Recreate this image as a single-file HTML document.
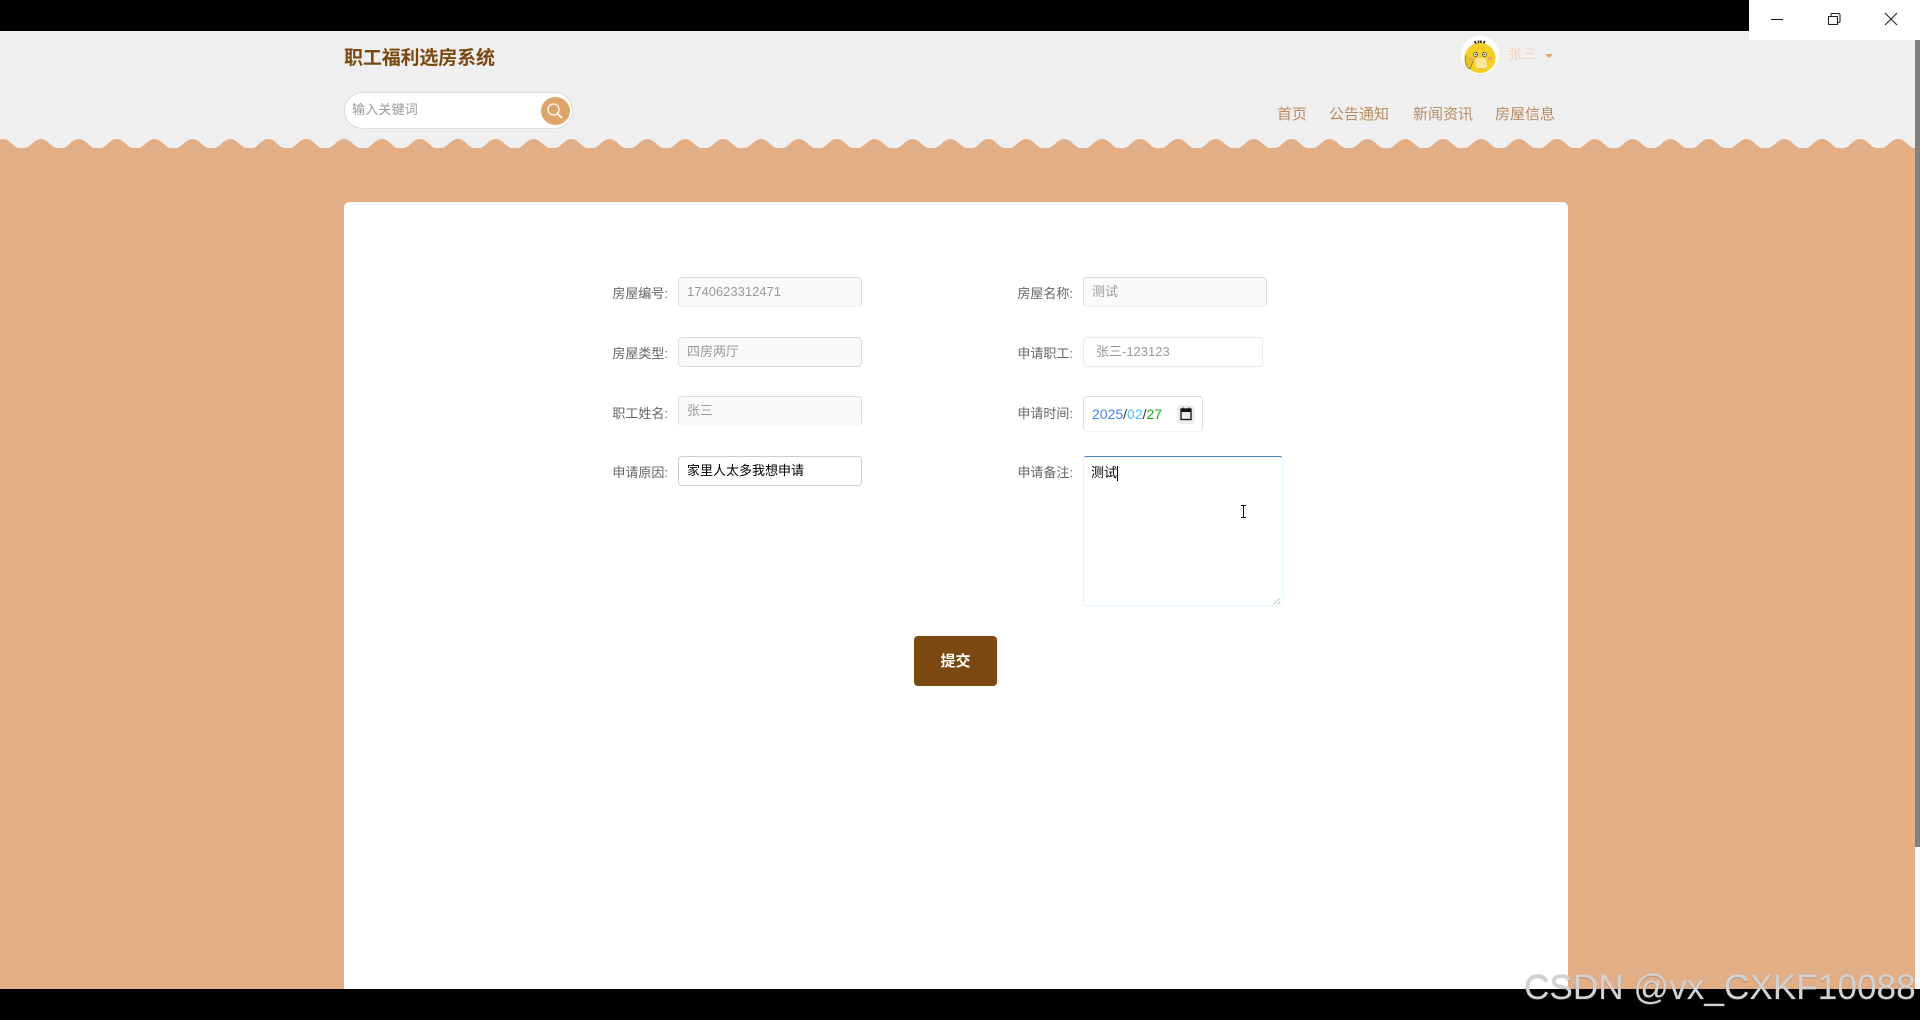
<!DOCTYPE html>
<html lang="zh-CN">
<head>
<meta charset="utf-8">
<title>职工福利选房系统</title>
<style>
html,body{margin:0;padding:0;width:1920px;height:1020px;overflow:hidden;background:#000;}
body{position:relative;font-family:"Liberation Sans","Noto Sans CJK SC",sans-serif;}
.a{position:absolute;}
.t{position:absolute;white-space:nowrap;line-height:20px;}
.lab{position:absolute;white-space:nowrap;line-height:20px;font-size:13px;color:#666;text-align:right;width:70px;}
.inp{position:absolute;box-sizing:border-box;width:184px;height:30px;border:1px solid #ddd;border-radius:4px;background:#fafafa;font-size:13px;color:#999;line-height:28px;padding-left:8px;white-space:nowrap;}
.nav{position:absolute;top:105px;font-size:15px;line-height:20px;color:#b98c62;white-space:nowrap;}
</style>
</head>
<body>
<div class="a" style="left:0;top:31px;width:1915px;height:958px;background:#e2ae86;"></div>
<div class="a" style="left:0;top:31px;width:1915px;height:108px;background:#efefef;"></div>
<svg class="a" style="left:0;top:139px;" width="1915" height="10" viewBox="0 0 1915 10">
<rect width="1915" height="10" fill="#efefef"/>
<defs><pattern id="w" x="-16" y="0" width="37.9" height="10" patternUnits="userSpaceOnUse">
<path d="M0 9L3 9C8 9 12 0 19 0C26 0 30 9 35 9L37.9 9V10H0Z" fill="#e2ae86"/></pattern></defs>
<rect width="1915" height="10" fill="url(#w)"/>
</svg>

<div class="t" style="left:344px;top:48px;font-size:19px;font-weight:bold;color:#7a4810;line-height:22px;letter-spacing:-.15px;">职工福利选房系统</div>

<div class="a" style="left:344px;top:92px;width:229px;height:37px;box-sizing:border-box;border:1px solid #ddd;border-radius:19px;background:#fff;"></div>
<div class="t" style="left:352px;top:100px;font-size:13px;color:#999;letter-spacing:.2px;">输入关键词</div>
<div class="a" style="left:541px;top:97px;width:29px;height:28px;border-radius:50%;background:#dfa469;"></div>
<svg class="a" style="left:541px;top:97px;" width="29" height="28" viewBox="0 0 29 28" fill="none" stroke="#fff">
<circle cx="12.500" cy="12.500" r="5.500" stroke-width="1.200"/><path d="M16.500 17L21 21" stroke-width="1.800"/>
</svg>

<svg class="a" style="left:1461px;top:36px;" width="38" height="38" viewBox="0 0 38 38">
<circle cx="19" cy="19" r="19" fill="#fff"/>
<path d="M15 8C14.500 6 14 5.500 13.500 5M17.500 7.500V4.500M20 7.500V4.500M22.500 8C23 6 23.500 5.500 24 5" stroke="#3a3020" stroke-width="1.800" fill="none"/>
<ellipse cx="19" cy="22" rx="15.500" ry="15" fill="#f4d027"/>
<path d="M5 19C3 25 5 32 9 33L12 25" fill="#e9c31f" stroke="#8a7a30" stroke-width=".8"/>
<circle cx="14.500" cy="18.500" r="2" fill="#fff" stroke="#333" stroke-width=".7"/><circle cx="14.800" cy="18.500" r=".8" fill="#222"/>
<circle cx="23.500" cy="18.500" r="2" fill="#fff" stroke="#333" stroke-width=".7"/><circle cx="23.200" cy="18.500" r=".8" fill="#222"/>
<ellipse cx="11" cy="23" rx="2" ry="1.500" fill="#f49a8c"/><ellipse cx="29" cy="22.500" rx="2" ry="1.500" fill="#f49a8c"/>
<path d="M14 23C16 21 23 21 25 23L27 31C24 33 16 33 14 31Z" fill="#f9e79a" stroke="#d9be50" stroke-width=".5"/>
</svg>
<div class="t" style="left:1508px;top:44px;font-size:14px;color:#f0d4b8;">张三</div>
<div class="a" style="left:1545px;top:54px;width:0;height:0;border-left:4px solid transparent;border-right:4px solid transparent;border-top:4px solid #e6a468;"></div>

<div class="nav" style="left:1277px;">首页</div>
<div class="nav" style="left:1329px;">公告通知</div>
<div class="nav" style="left:1413px;">新闻资讯</div>
<div class="nav" style="left:1495px;">房屋信息</div>

<div class="a" style="left:344px;top:202px;width:1224px;height:787px;background:#fff;border-radius:5px 5px 0 0;"></div>

<div class="lab" style="left:598px;top:284px;">房屋编号:</div>
<div class="lab" style="left:598px;top:344px;">房屋类型:</div>
<div class="lab" style="left:598px;top:404px;">职工姓名:</div>
<div class="lab" style="left:598px;top:463px;">申请原因:</div>
<div class="inp" style="left:678px;top:277px;border-bottom-color:#f4f4f4;">1740623312471</div>
<div class="inp" style="left:678px;top:337px;">四房两厅</div>
<div class="inp" style="left:678px;top:396px;border-bottom-color:#f4f4f4;">张三</div>
<div class="inp" style="left:678px;top:456px;background:#fff;color:#000;border-color:#ccc;">家里人太多我想申请</div>

<div class="lab" style="left:1003px;top:284px;">房屋名称:</div>
<div class="lab" style="left:1003px;top:344px;">申请职工:</div>
<div class="lab" style="left:1003px;top:404px;">申请时间:</div>
<div class="lab" style="left:1003px;top:463px;">申请备注:</div>
<div class="inp" style="left:1083px;top:277px;border-bottom-color:#f4f4f4;">测试</div>
<div class="inp" style="left:1083px;top:337px;width:180px;background:#fff;border-color:#eaeaea;padding-left:12px;">张三-123123</div>
<div class="a" style="left:1083px;top:396px;width:120px;height:36px;box-sizing:border-box;border:1px solid #ddd;border-bottom-color:#f2f2f2;border-radius:4px;"></div>
<div class="t" style="left:1092px;top:404px;font-size:14px;"><span style="color:#4285f4;">2025</span><span style="color:#333;">/</span><span style="color:#4fc3f7;">02</span><span style="color:#333;">/</span><span style="color:#1aad19;">27</span></div>
<div class="a" style="left:1177px;top:405px;width:18px;height:19px;background:#ececec;border-radius:4px;"></div>
<svg class="a" style="left:1180px;top:407px;" width="12" height="14" viewBox="0 0 12 14">
<path d="M3 0.500V2M9 0.500V2" stroke="#111" stroke-width="1.200"/>
<rect x="1" y="2" width="10" height="10.500" fill="none" stroke="#111" stroke-width="1.300"/>
<rect x="1" y="2" width="10" height="3" fill="#111"/>
</svg>

<div class="a" style="left:1083px;top:456px;width:200px;height:150px;box-sizing:border-box;border:1px solid #dff6fb;border-top:1px solid #4a7fc8;border-radius:3px;"></div>
<div class="t" style="left:1091px;top:463px;font-size:13px;color:#000;">测试</div>
<div class="a" style="left:1117px;top:466px;width:1px;height:15px;background:#000;"></div>
<svg class="a" style="left:1273px;top:597px;" width="9" height="8" viewBox="0 0 9 8"><path d="M1 7L7 1M5 7L7 5" stroke="#888" stroke-width="1" stroke-dasharray="1 1" fill="none"/></svg>
<svg class="a" style="left:1240px;top:505px;" width="7" height="13" viewBox="0 0 7 13"><path d="M1 .5H6M3.500 .5V12.500M1 12.500H6" stroke="#111" stroke-width="1" fill="none"/></svg>

<div class="a" style="left:914px;top:636px;width:83px;height:50px;background:#7a4810;border-radius:4px;color:#fff;font-size:15px;font-weight:bold;text-align:center;line-height:52px;">提交</div>

<div class="a" style="left:1915px;top:31px;width:5px;height:958px;background:#f8f8f8;"></div>
<div class="a" style="left:1915px;top:40px;width:5px;height:807px;background:#808080;"></div>

<div class="a" style="left:1749px;top:0;width:171px;height:40px;background:#fff;"></div>
<svg class="a" style="left:1749px;top:0;" width="171" height="40" viewBox="0 0 171 40" fill="none" stroke="#222" stroke-width="1.100">
<path d="M22 19.500H34"/>
<path d="M79.500 16.500H88.500V24.500H79.500ZM82 16.500V14.500Q82 13.500 83 13.500H89.500Q91 13.500 91 15V21.500Q91 22.500 88.500 22.500"/>
<path d="M136 13L148 25M148 13L136 25"/>
</svg>

<div class="t" style="left:1524px;top:968px;font-size:35.2px;line-height:40px;color:#d2d2d2;text-shadow:0 1px 1px rgba(90,90,90,.35);">CSDN @vx_CXKF10088</div>
</body>
</html>
